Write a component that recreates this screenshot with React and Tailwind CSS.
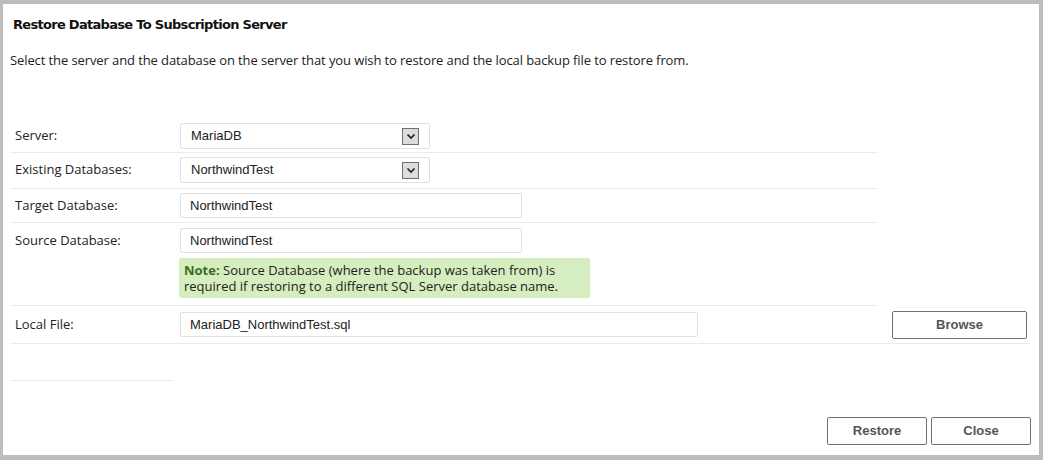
const rowLine = 'border-b border-[#ebebeb]'
const labelCls = "w-[170px] pl-[5px] text-[13px] text-[#222] font-['Open_Sans',sans-serif]"

function Select({ value }) {
  return (
    <div className="w-[250px] h-[26px] border border-[#e0e0e0] rounded-[2px] bg-white flex items-center justify-between pl-[10px] pr-[10px]">
      <span className="text-[13px] text-[#222]">{value}</span>
      <span className="w-[17px] h-[17px] border border-[#707070] bg-[#dcdcdc] flex items-center justify-center">
        <svg width="10" height="7" viewBox="0 0 10 7">
          <path d="M1.5 1.5 L5 5 L8.5 1.5" fill="none" stroke="#222" strokeWidth="1.7" />
        </svg>
      </span>
    </div>
  )
}

function TextBox({ value, width }) {
  return (
    <div className={`${width} h-[25px] border border-[#e0e0e0] rounded-[2px] bg-white flex items-center pl-[9px]`}>
      <span className="text-[13px] text-[#222]">{value}</span>
    </div>
  )
}

function Row({ label, height, pad, children }) {
  return (
    <div className={`flex items-start ${rowLine} ${height} ${pad}`}>
      <div className={`${labelCls} h-[26px] flex items-center`}>{label}</div>
      <div className="flex-1">{children}</div>
    </div>
  )
}

function Button({ children, className = '' }) {
  return (
    <button className={`h-[28px] border border-[#707070] rounded-[2px] bg-white text-[13px] font-bold text-[#555] ${className}`}>
      {children}
    </button>
  )
}

export default function App() {
  return (
    <div className="w-[1043px] h-[460px] bg-[#bdbdbd] pt-[4px] pl-[3px] font-['Liberation_Sans',Arial,sans-serif]">
      <div className="w-[1036px] h-[451px] bg-white flex flex-col">
        <h1 className="pl-[10px] pt-[11px] text-[13px] font-bold text-[#111] font-['DejaVu_Sans',sans-serif] tracking-[-0.7px]">
          Restore Database To Subscription Server
        </h1>
        <p className="pl-[7px] pt-[16px] text-[13px] text-[#222] font-['Open_Sans',sans-serif] tracking-[-0.1px]">
          Select the server and the database on the server that you wish to restore and the local backup file to restore from.
        </p>

        <div className="pl-[7px] pt-[48px] pr-[9px] flex flex-col">
          <div className="w-[868px]">
            <Row label="Server:" height="h-[35px]" pad="pt-[5px]">
              <Select value="MariaDB" />
            </Row>
            <Row label="Existing Databases:" height="h-[36px]" pad="pt-[4px]">
              <Select value="NorthwindTest" />
            </Row>
            <Row label="Target Database:" height="h-[34px]" pad="pt-[4px]">
              <TextBox value="NorthwindTest" width="w-[342px]" />
            </Row>
            <div className={`flex items-start ${rowLine} h-[83px] pt-[5px]`}>
              <div className={`${labelCls} h-[25px] flex items-center`}>Source Database:</div>
              <div className="flex-1 flex flex-col gap-[5px]">
                <TextBox value="NorthwindTest" width="w-[342px]" />
                <div className="w-[411px] ml-[-1px] bg-[#d6edbf] rounded-[2px] px-[5px] pt-[4px] pb-[4px] text-[13px] leading-[16px] text-[#222] font-['Open_Sans',sans-serif]">
                  <span className="font-bold text-[#3e6b1f]">Note: </span>
                  <span>Source Database (where the backup was taken from) is required if restoring to a different SQL Server database name.</span>
                </div>
              </div>
            </div>
          </div>
          <div className={`flex items-center ${rowLine} h-[38px]`}>
            <div className={labelCls}>Local File:</div>
            <TextBox value="MariaDB_NorthwindTest.sql" width="w-[518px]" />
            <div className="flex-1" />
            <Button className="w-[135px] mr-[3px]">Browse</Button>
          </div>
          <div className={`w-[163px] h-[37px] ${rowLine}`} />
        </div>

        <div className="flex-1" />
        <div className="flex justify-end gap-[4px] pr-[8px] pb-[10px]">
          <Button className="w-[100px]">Restore</Button>
          <Button className="w-[100px]">Close</Button>
        </div>
      </div>
    </div>
  )
}
